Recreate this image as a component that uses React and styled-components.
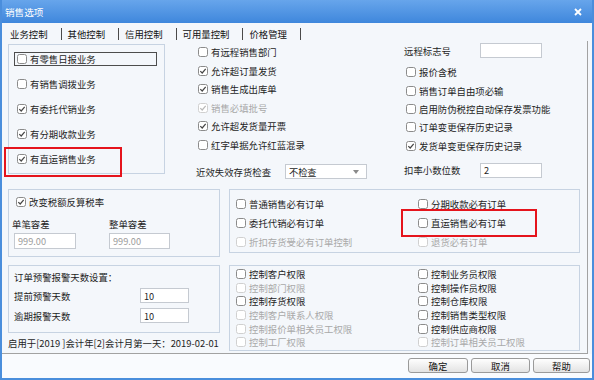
import React from 'react';
import styled, { createGlobalStyle } from 'styled-components';

const Global = createGlobalStyle`
  html, body { margin: 0; padding: 0; background: #fff; }
  body { font-family: "Noto Sans CJK SC", "Noto Sans", sans-serif; }
`;

const FONT = `"Noto Sans CJK SC", "Noto Sans", sans-serif`;

const Window = styled.div`
  width: 594px;
  height: 380px;
  box-sizing: border-box;
  border: 2px solid #4a8edc;
  border-top: 0;
  display: flex;
  flex-direction: column;
  font-family: ${FONT};
  font-size: 9.4px;
  color: #1e1e1e;
  overflow: hidden;
`;

const TitleBar = styled.div`
  height: 23px;
  margin: 0 -2px;
  padding: 0 0 0 5px;
  display: flex;
  align-items: center;
  justify-content: space-between;
  background: linear-gradient(#67a5eb, #3f87dc);
  color: #fff;
  font-size: 9.6px;
  flex: none;
`;

const CloseIcon = styled.svg`
  width: 8px;
  height: 8px;
  margin-right: 12px;
`;

const Body = styled.div`
  flex: 1;
  display: flex;
  flex-direction: column;
  background: #f4f7fb;
`;

const TabStrip = styled.div`
  height: 18px;
  flex: none;
  display: flex;
  align-items: flex-end;
  padding: 0 0 1px 2px;
  box-sizing: border-box;
`;

const Tab = styled.div`
  padding: 0 13px 0 6px;
  line-height: 12px;
  border-right: 1px solid #4a4a4a;
  color: #111;
`;

const TabPanel = styled.div`
  width: 586px;
  height: 313px;
  box-sizing: border-box;
  flex: none;
  border-right: 1px solid #a2a2a2;
  border-bottom: 1px solid #a2a2a2;
  padding-top: 2px;
  display: flex;
  flex-direction: column;
`;

const TopSection = styled.div`
  height: 146px;
  flex: none;
  display: flex;
  padding-left: 6px;
`;

const GroupBox = styled.div`
  box-sizing: border-box;
  border: 1px solid #c7d3e2;
  width: ${p => p.$w}px;
  height: ${p => p.$h}px;
  margin-top: ${p => p.$mt || 0}px;
  padding: ${p => p.$pad || '0'};
  flex: none;
`;

const Column = styled.div`
  width: ${p => p.$w}px;
  margin-left: ${p => p.$ml}px;
  display: flex;
  flex-direction: column;
  flex: none;
`;

const Row = styled.div`
  position: relative;
  height: ${p => p.$h}px;
  display: flex;
  align-items: center;
  padding-left: ${p => p.$pl || 0}px;
  margin-top: ${p => p.$mt || 0}px;
  flex: none;
`;

const FocusFrame = styled.div`
  width: 143px;
  height: 14px;
  box-sizing: border-box;
  border: 1px solid #4d4d4d;
  padding-left: 2px;
  display: flex;
  align-items: center;
`;

const Item = styled.div`
  display: flex;
  align-items: center;
  gap: 3px;
  white-space: nowrap;
  line-height: 12px;
  color: ${p => (p.$disabled ? '#a9a9a9' : '#1e1e1e')};
`;

const CheckSvg = styled.svg`
  width: 10px;
  height: 10px;
  flex: none;
`;

const RedMark = styled.div`
  position: absolute;
  left: ${p => p.$l}px;
  top: ${p => p.$t}px;
  width: ${p => p.$w}px;
  height: ${p => p.$h}px;
  box-sizing: border-box;
  border: 2px solid #e5141c;
  pointer-events: none;
`;

const Label = styled.span`
  width: ${p => (p.$w ? `${p.$w}px` : 'auto')};
  flex: none;
  line-height: 12px;
  white-space: nowrap;
`;

const Input = styled.div`
  box-sizing: border-box;
  width: ${p => p.$w}px;
  height: ${p => p.$h || 15}px;
  margin-left: ${p => p.$ml || 0}px;
  margin-top: ${p => p.$mt || 0}px;
  border: 1px solid #c5cad1;
  background: #fff;
  padding-left: 3px;
  display: flex;
  align-items: center;
  color: ${p => (p.$disabled ? '#9b9b9b' : '#1e1e1e')};
  font-size: 9.2px;
  flex: none;
`;

const Select = styled(Input)`
  position: relative;
  &::after {
    content: '';
    position: absolute;
    right: 7px;
    top: 5px;
    border-left: 3px solid transparent;
    border-right: 3px solid transparent;
    border-top: 4px solid #8a8a8a;
  }
`;

const BottomSection = styled.div`
  display: flex;
  padding-left: 6px;
`;

const FieldPair = styled.div`
  display: flex;
  margin-top: 9px;
`;

const Field = styled.div`
  width: ${p => p.$w}px;
  display: flex;
  flex-direction: column;
  flex: none;
`;

const BoxTitle = styled.div`
  line-height: 12px;
  white-space: nowrap;
`;

const StatusLine = styled.div`
  margin-top: 4px;
  line-height: 12px;
  white-space: nowrap;
`;

const CheckGrid = styled.div`
  display: grid;
  grid-template-columns: 182px 1fr;
  grid-auto-rows: ${p => p.$rh}px;
`;

const Cell = styled.div`
  position: relative;
  display: flex;
  align-items: center;
`;

const Footer = styled.div`
  flex: 1;
  display: flex;
  justify-content: flex-end;
  align-items: flex-start;
  gap: 3px;
  padding: 4px 2px 0 0;
  background: #f9fbfe;
`;

const Button = styled.div`
  width: ${p => p.$w}px;
  height: 15px;
  box-sizing: border-box;
  border: 1px solid #9a9a9a;
  border-radius: 3px;
  background: linear-gradient(#fefefe, #e3e3e3);
  display: flex;
  align-items: center;
  justify-content: center;
  color: #111;
  font-size: 9.4px;
`;

const Check = ({ checked, disabled }) => (
  <CheckSvg viewBox="0 0 10 10">
    <rect x="0.5" y="0.5" width="9" height="9" rx="2" fill="#fff" stroke={disabled ? '#d0d0d0' : '#8b8b8b'} />
    {checked && (
      <path d="M2.3 5.1 L4.2 7 L7.7 2.9" fill="none" stroke={disabled ? '#b8b8b8' : '#454545'} strokeWidth="1.2" />
    )}
  </CheckSvg>
);

const CheckItem = ({ label, checked, disabled }) => (
  <Item $disabled={disabled}>
    <Check checked={checked} disabled={disabled} />
    <span>{label}</span>
  </Item>
);

const tabs = ['业务控制', '其他控制', '信用控制', '可用量控制', '价格管理'];

const leftGroup = [
  { label: '有零售日报业务', checked: false, focus: true },
  { label: '有销售调拨业务', checked: false },
  { label: '有委托代销业务', checked: true },
  { label: '有分期收款业务', checked: true },
  { label: '有直运销售业务', checked: true, red: true },
];

const middleList = [
  { label: '有远程销售部门', checked: false },
  { label: '允许超订量发货', checked: true },
  { label: '销售生成出库单', checked: true },
  { label: '销售必填批号', checked: true, disabled: true },
  { label: '允许超发货量开票', checked: true },
  { label: '红字单据允许红蓝混录', checked: false },
];

const rightList = [
  { label: '报价含税', checked: false },
  { label: '销售订单自由项必输', checked: false },
  { label: '启用防伪税控自动保存发票功能', checked: false },
  { label: '订单变更保存历史记录', checked: false },
  { label: '发货单变更保存历史记录', checked: true },
];

const orderChecks = [
  { label: '普通销售必有订单' },
  { label: '分期收款必有订单' },
  { label: '委托代销必有订单' },
  { label: '直运销售必有订单', red: true },
  { label: '折扣存货受必有订单控制', disabled: true },
  { label: '退货必有订单', disabled: true },
];

const permChecks = [
  { label: '控制客户权限' },
  { label: '控制业务员权限' },
  { label: '控制部门权限', disabled: true },
  { label: '控制操作员权限' },
  { label: '控制存货权限' },
  { label: '控制仓库权限' },
  { label: '控制客户联系人权限', disabled: true },
  { label: '控制销售类型权限' },
  { label: '控制报价单相关员工权限', disabled: true },
  { label: '控制供应商权限' },
  { label: '控制工厂权限', disabled: true },
  { label: '控制订单相关员工权限', disabled: true },
];

export default function App() {
  return (
    <>
      <Global />
      <Window>
        <TitleBar>
          <span>销售选项</span>
          <CloseIcon viewBox="0 0 8 8">
            <path d="M1 1 L7 7 M7 1 L1 7" stroke="#fff" strokeWidth="1.8" />
          </CloseIcon>
        </TitleBar>
        <Body>
          <TabStrip>
            {tabs.map(t => (
              <Tab key={t}>{t}</Tab>
            ))}
          </TabStrip>
          <TabPanel>
            <TopSection>
              <GroupBox $w={157} $h={130} $mt={1} $pad="1px 0 0 5px">
                {leftGroup.map(it => (
                  <Row key={it.label} $h={25} $pl={it.focus ? 0 : 3}>
                    {it.focus ? (
                      <FocusFrame>
                        <CheckItem label={it.label} checked={it.checked} />
                      </FocusFrame>
                    ) : (
                      <CheckItem label={it.label} checked={it.checked} />
                    )}
                    {it.red && <RedMark $l={-10} $t={1} $w={118} $h={30} />}
                  </Row>
                ))}
              </GroupBox>
              <Column $w={172} $ml={31}>
                {middleList.map(it => (
                  <Row key={it.label} $h={18.5} $pl={2}>
                    <CheckItem {...it} />
                  </Row>
                ))}
                <Row $h={15} $mt={10}>
                  <Label $w={89}>近效失效存货检查</Label>
                  <Select $w={82}>不检查</Select>
                </Row>
              </Column>
              <Column $w={140} $ml={36}>
                <Row $h={15}>
                  <Label $w={76}>远程标志号</Label>
                  <Input $w={62} />
                </Row>
                <Row $h={5} />
                {rightList.map(it => (
                  <Row key={it.label} $h={18.4} $pl={2}>
                    <CheckItem {...it} />
                  </Row>
                ))}
                <Row $h={15} $mt={8}>
                  <Label $w={76}>扣率小数位数</Label>
                  <Input $w={62}>2</Input>
                </Row>
              </Column>
            </TopSection>
            <BottomSection>
              <Column $w={212} $ml={0}>
                <GroupBox $w={212} $h={68} $pad="5px 0 0 3px">
                  <Row $h={14} $pl={4}>
                    <CheckItem label="改变税额反算税率" checked />
                  </Row>
                  <FieldPair>
                    <Field $w={97}>
                      <Label>单笔容差</Label>
                      <Input $w={62} $h={16} $ml={2} $mt={3} $disabled>999.00</Input>
                    </Field>
                    <Field $w={80}>
                      <Label>整单容差</Label>
                      <Input $w={61} $h={16} $mt={3} $disabled>999.00</Input>
                    </Field>
                  </FieldPair>
                </GroupBox>
                <GroupBox $w={212} $h={68} $mt={8} $pad="5px 0 0 5px">
                  <BoxTitle>订单预警报警天数设置：</BoxTitle>
                  <Row $h={15} $mt={5}>
                    <Label $w={126}>提前预警天数</Label>
                    <Input $w={49}>10</Input>
                  </Row>
                  <Row $h={15} $mt={5}>
                    <Label $w={126}>逾期报警天数</Label>
                    <Input $w={49}>10</Input>
                  </Row>
                </GroupBox>
                <StatusLine>启用于[2019 ]会计年[2]会计月第一天：2019-02-01</StatusLine>
              </Column>
              <Column $w={351} $ml={9}>
                <GroupBox $w={351} $h={64} $pad="4px 0 0 6px">
                  <CheckGrid $rh={19}>
                    {orderChecks.map(it => (
                      <Cell key={it.label}>
                        <CheckItem label={it.label} disabled={it.disabled} />
                        {it.red && <RedMark $l={-17} $t={-4} $w={136} $h={28} />}
                      </Cell>
                    ))}
                  </CheckGrid>
                </GroupBox>
                <GroupBox $w={351} $h={86} $mt={12} $pad="1.5px 0 0 6px">
                  <CheckGrid $rh={13.6}>
                    {permChecks.map(it => (
                      <Cell key={it.label}>
                        <CheckItem label={it.label} disabled={it.disabled} />
                      </Cell>
                    ))}
                  </CheckGrid>
                </GroupBox>
              </Column>
            </BottomSection>
          </TabPanel>
          <Footer>
            <Button $w={60}>确定</Button>
            <Button $w={59}>取消</Button>
            <Button $w={57}>帮助</Button>
          </Footer>
        </Body>
      </Window>
    </>
  );
}
